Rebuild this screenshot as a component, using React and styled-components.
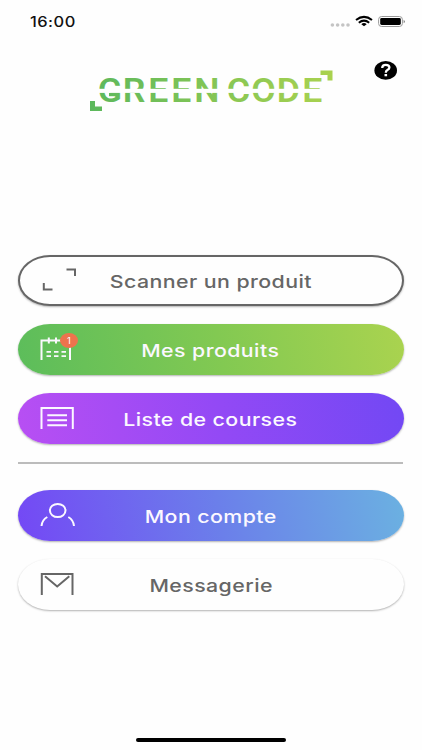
import React from "react";
import styled, { createGlobalStyle } from "styled-components";

const GlobalStyle = createGlobalStyle`
  * { box-sizing: border-box; }
  html, body { margin: 0; background: #fefefe; }
`;

const Screen = styled.main`
  width: 422px;
  height: 750px;
  display: flex;
  flex-direction: column;
  overflow: hidden;
  background: #fefefe;
  font-family: Inter, "Liberation Sans", sans-serif;
`;

const StatusBar = styled.header`
  height: 44px;
  flex: none;
  display: flex;
  justify-content: space-between;
  padding: 13px 17px 0 30px;
`;

const Clock = styled.time`
  font-size: 13.8px;
  line-height: 17px;
  font-weight: 500;
  letter-spacing: 0.4px;
  color: #111;
  transform: translateY(0.5px) scaleX(1.19);
  transform-origin: left;
`;

const StatusIcons = styled.svg`
  width: 76px;
  height: 18px;
  display: block;
`;

const Top = styled.section`
  height: 211px;
  flex: none;
  display: flex;
  align-items: flex-start;
  padding: 16px 24px 0 88px;
`;

const Logo = styled.svg`
  width: 248px;
  height: 56px;
  flex: none;
  margin-top: 8px;
`;

const LogoText = styled.text`
  font-family: Roboto, sans-serif;
  font-size: 33px;
  font-weight: 600;
`;

const HelpButton = styled.button`
  border: 0;
  padding: 0;
  background: none;
  margin: 0 0 0 auto;
  width: 24px;
  height: 22px;

  svg { display: block; }
`;

const Menu = styled.nav`
  flex: none;
  display: flex;
  flex-direction: column;
  gap: 18px;
  padding: 0 18px;
`;

const Pill = styled.button`
  position: relative;
  width: 386px;
  height: 51px;
  padding: 0;
  display: grid;
  place-items: center;
  border: ${(p) => (p.$outlined ? "2px solid #666" : "0")};
  border-radius: 32px / 25.5px;
  background: ${(p) => p.$fill || "#fefefe"};
  color: ${(p) => p.$color || "#fbf8ff"};
  font-family: inherit;
  box-shadow: 0 1px 2px rgba(0, 0, 0, 0.3);
`;

const Label = styled.span`
  font-size: 17.8px;
  line-height: 24px;
  font-weight: 500;
  letter-spacing: 0.35px;
  white-space: nowrap;
  transform: translate(-0.3px, 0.8px) scaleX(1.2);
`;

const PillIcon = styled.svg`
  position: absolute;
  left: ${(p) => (p.$outlined ? 18 : 20)}px;
  top: ${(p) => (p.$outlined ? 8 : 10)}px;
  width: 42px;
  height: 32px;
  fill: none;
  stroke: currentColor;
  stroke-width: 2;
`;

const Badge = styled.span`
  position: absolute;
  left: 42px;
  top: 9px;
  width: 18px;
  height: 15px;
  border-radius: 50%;
  display: grid;
  place-items: center;
  background: #ee734d;
  color: #fff;
  font-size: 9.5px;
  line-height: 15px;
`;

const Divider = styled.hr`
  width: 385px;
  height: 2px;
  margin: 0 0 8px;
  border: 0;
  background: #bcbcbc;
`;

const HomeIndicator = styled.div`
  width: 150px;
  height: 4px;
  margin: auto 0 8px 136px;
  border-radius: 2px;
  background: #000;
`;

const logoLetters = [
  ["G", 97.7],
  ["R", 122.8],
  ["E", 148.3],
  ["E", 171.3],
  ["N", 194.3],
  ["C", 226.7],
  ["O", 251.2],
  ["D", 276.8],
  ["E", 302.3],
];
const letterStretch = 1.08;
const logoPositions = [
  ...logoLetters.slice(0, 5).map((l) => l[1]),
  219,
  ...logoLetters.slice(5).map((l) => l[1]),
]
  .map((x) => (x / letterStretch).toFixed(2))
  .join(" ");

export default function App() {
  return (
    <>
      <GlobalStyle />
      <Screen>
        <StatusBar>
          <Clock>16:00</Clock>
          <StatusIcons viewBox="0 0 76 18">
            <g fill="#c4c4c4">
              <circle cx="3.4" cy="12" r="1.8" />
              <circle cx="8.6" cy="12" r="1.8" />
              <circle cx="13.8" cy="12" r="1.8" />
              <circle cx="19" cy="12" r="1.8" />
            </g>
            <g fill="none" stroke="#000" strokeWidth="2">
              <path d="M27 7 Q35 0.8 43 7" />
              <path d="M29.8 9.7 Q35 5.6 40.2 9.7" />
            </g>
            <path d="M32.3 11.2Q35 9 37.7 11.2L35 13.3Z" fill="#000" />
            <rect x="49.6" y="3.5" width="23.8" height="10" rx="3" fill="#fff" stroke="#999" />
            <rect x="51.2" y="5" width="20.6" height="7" rx="1.4" />
            <path d="M74.7 6.7Q77 8.5 74.7 10.3Z" fill="#777" />
          </StatusIcons>
        </StatusBar>

        <Top>
          <Logo viewBox="88 68 248 56" role="img" aria-label="Green Code">
            <defs>
              <linearGradient id="logoGreen" gradientUnits="userSpaceOnUse" x1="90" y1="0" x2="333" y2="0">
                <stop offset="0" stopColor="#5cb85c" />
                <stop offset="1" stopColor="#aad24f" />
              </linearGradient>
              <linearGradient id="letterGreen" gradientUnits="userSpaceOnUse" x1="83" y1="0" x2="308" y2="0">
                <stop offset="0" stopColor="#5cb85c" />
                <stop offset="1" stopColor="#aad24f" />
              </linearGradient>
            </defs>
            <LogoText x={logoPositions} y="102.5" transform={`scale(${letterStretch} 1)`} fill="url(#letterGreen)">
              GREEN CODE
            </LogoText>
            <g fill="url(#logoGreen)">
              <path d="M90 101h5v5.5h7v4.5H90Z" />
              <path d="M320.5 70.5H332.5v10h-5v-5.5h-7Z" />
              <rect x="109" y="92.8" width="9.5" height="3.4" />
            </g>
            <rect x="96" y="88.8" width="230" height="4.1" fill="#fefefe" />
          </Logo>
          <HelpButton aria-label="Aide">
            <svg width="24" height="22" viewBox="0 0 24 22">
              <ellipse cx="11.7" cy="10.4" rx="11.3" ry="9.4" />
              <path d="M8.2 8Q8.2 4.8 11.8 4.8Q15.4 4.8 15.4 7.6Q15.4 9 13.4 10.1Q11.8 11 11.8 12.8" fill="none" stroke="#fff" strokeWidth="2.3" />
              <rect x="10.5" y="14" width="2.6" height="2.3" fill="#fff" />
            </svg>
          </HelpButton>
        </Top>

        <Menu>
          <Pill $outlined $color="#666">
            <PillIcon $outlined viewBox="38 265 42 32">
              <path d="M66.5 269.5H75V276M43.8 283V289.5H52.5" />
            </PillIcon>
            <Label>Scanner un produit</Label>
          </Pill>
          <Pill $fill="linear-gradient(80deg, #5cbd5b, #82c952 52%, #aad34f)">
            <PillIcon viewBox="38 334 42 32">
              <path d="M41.5 360V340.5H70V360M48.8 337.5V343.5M56 337.5V343.5" />
              <path d="M46.5 351.8H66M46.5 356.2H66" strokeDasharray="4.5 3" strokeWidth="1.8" />
            </PillIcon>
            <Badge>1</Badge>
            <Label>Mes produits</Label>
          </Pill>
          <Pill $fill="linear-gradient(80deg, #b84ff3, #9349f5 52%, #7248f4)">
            <PillIcon viewBox="38 403 42 32">
              <path d="M41.5 429V408H72.8V429M47.3 415.2H67M47.3 420.2H67M47.3 425.2H67" />
            </PillIcon>
            <Label>Liste de courses</Label>
          </Pill>
          <Divider />
          <Pill $fill="linear-gradient(80deg, #7448f5, #6b7fea 52%, #6bb1e1)">
            <PillIcon viewBox="38 500 42 32">
              <ellipse cx="57.7" cy="510.5" rx="7.8" ry="6.6" />
              <path d="M41.5 526Q42 520 47.3 517M68.3 517Q73.5 520 74 526" />
            </PillIcon>
            <Label>Mon compte</Label>
          </Pill>
          <Pill $color="#666">
            <PillIcon viewBox="38 569 42 32">
              <path d="M41.8 595V574H72.5V595M45 576.3L57.2 586.5L69.3 576.3" />
            </PillIcon>
            <Label>Messagerie</Label>
          </Pill>
        </Menu>
        <HomeIndicator />
      </Screen>
    </>
  );
}
